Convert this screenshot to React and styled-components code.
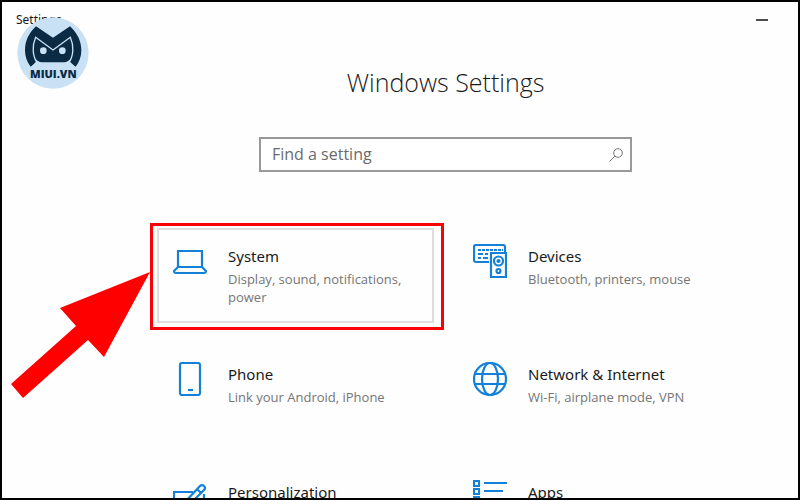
import React from "react";
import styled, { createGlobalStyle } from "styled-components";

const GlobalStyle = createGlobalStyle`
  * { box-sizing: border-box; }
  body { margin: 0; background: #fff; }
`;

const Window = styled.div`
  position: relative;
  height: 100vh;
  overflow: hidden;
  border: 2px solid #000;
  background: #fefefe;
  color: #1a1a1a;
  font-family: "Noto Sans", "Open Sans", sans-serif;
`;

const TitleBar = styled.header`
  display: flex;
  justify-content: space-between;
  align-items: center;
  height: 36px;
  padding: 0 28px 0 14px;
`;

const WindowName = styled.span`
  font-size: 12px;
  line-height: 16px;
`;

const MinimizeButton = styled.button`
  display: flex;
  align-items: center;
  justify-content: center;
  width: 16px;
  height: 24px;
  padding: 0;
  border: 0;
  background: transparent;
  color: #000;
`;

const Logo = styled.svg`
  position: absolute;
  top: 15px;
  left: 15px;
  width: 72px;
  height: 72px;
`;

const Main = styled.main`
  display: flex;
  flex-direction: column;
  align-items: center;
  padding: 24px 0 0 91px;
`;

const Heading = styled.h1`
  margin: 0 0 35px;
  font-family: "Open Sans", sans-serif;
  font-size: 25px;
  font-weight: 300;
  line-height: 40px;
`;

const SearchBox = styled.form`
  display: flex;
  align-items: center;
  width: 373px;
  max-width: 100%;
  height: 35px;
  margin-bottom: 56px;
  padding: 0 7px 0 11px;
  border: 2px solid #999;
  background: #fff;
`;

const SearchInput = styled.input`
  flex: 1;
  min-width: 0;
  height: 24px;
  padding: 0 0 2px;
  border: 0;
  outline: 0;
  background: transparent;
  color: #1a1a1a;
  font-family: "Open Sans", sans-serif;
  font-size: 16px;
  &::placeholder { color: #6b6b6b; opacity: 1; }
`;

const SearchButton = styled.button`
  display: flex;
  padding: 0;
  border: 0;
  background: transparent;
  color: #777;
`;

const Grid = styled.nav`
  display: grid;
  grid-template-columns: repeat(2, 277px);
  grid-auto-rows: 95px;
  gap: 23px;
`;

const Card = styled.a`
  position: relative;
  display: flex;
  gap: 21px;
  padding: 14px;
  border: 2px solid ${(p) => (p.$active ? "#dedede" : "transparent")};
  color: inherit;
  text-decoration: none;
`;

const CardIcon = styled.svg`
  flex: none;
  width: 34px;
  height: 34px;
  fill: none;
  stroke: #1580d8;
  stroke-width: 2.2;
`;

const CardTitle = styled.span`
  display: block;
  font-size: 15px;
  line-height: 24px;
  white-space: nowrap;
`;

const CardText = styled.span`
  display: block;
  padding: 2px 0 0;
  color: #757575;
  font-family: "Open Sans", sans-serif;
  font-size: 13px;
  line-height: 18px;
`;

const Highlight = styled.span`
  position: absolute;
  inset: -7px -12px -9px -9px;
  border: 3px solid #fb0007;
  pointer-events: none;
`;

const Arrow = styled.svg`
  position: absolute;
  top: 41px;
  right: 100%;
  width: 140px;
  height: 128px;
  margin-right: 9px;
  fill: #fe0000;
  pointer-events: none;
`;

const icons = {
  laptop: (
    <>
      <path d="M5 7h24v16H5z" />
      <path d="M5 23 1 27q0 2 2 2h28q2 0 2-2l-4-4" />
    </>
  ),
  devices: (
    <>
      <path d="M16 18H3q-2 0-2-2V3q0-2 2-2h27q2 0 2 2v5" />
      <path d="M5 6h25" strokeDasharray="3 1" />
      <path d="M5 10h5M12 10h3M5 14h3M10 14h5" />
      <path d="M18 9h15v24H18z" />
      <circle cx="25.5" cy="17" r="4.5" />
      <circle cx="25.5" cy="17" r="1" />
      <circle cx="25.5" cy="27" r="2" />
    </>
  ),
  phone: (
    <>
      <rect x="7" y="1" width="20" height="32" rx="2" />
      <path d="M15 28h5" />
    </>
  ),
  globe: (
    <>
      <circle cx="17" cy="17" r="16" />
      <ellipse cx="17" cy="17" rx="8" ry="16" />
      <path d="M2 12h30M2 22h30" />
    </>
  ),
  pen: (
    <>
      <path d="M20 12H1v20h30V14" />
      <path d="M12 22 27 6q2-2 4 0t0 4L17 24l-6 2z M24 9l4 4" />
    </>
  ),
  list: (
    <>
      <path d="M1 1h5v5H1zM1 9h5v5H1zM1 17h5v5H1z" />
      <path d="M11 3h23M11 11h19M11 19h23" />
    </>
  ),
};

const categories = [
  { icon: "laptop", title: "System", text: "Display, sound, notifications, power", active: true },
  { icon: "devices", title: "Devices", text: "Bluetooth, printers, mouse" },
  { icon: "phone", title: "Phone", text: "Link your Android, iPhone" },
  { icon: "globe", title: "Network & Internet", text: "Wi-Fi, airplane mode, VPN" },
  { icon: "pen", title: "Personalization" },
  { icon: "list", title: "Apps" },
];

function MiuiLogo() {
  return (
    <Logo viewBox="50 52 216 216" role="img" aria-label="MIUI.VN">
      <circle cx="158" cy="160" r="107" fill="#c9e1f5" />
      <path
        fill="#0b2b45"
        d="M107 80 158 114 209 80C232 101 243 126 243 152 243 171 237 187 226 201L206 186 158 151 110 186 91 201C80 187 74 171 74 152 74 126 84 101 107 80Z"
      />
      <path
        fill="#0b2b45"
        stroke="#c9e1f5"
        strokeWidth="4"
        d="M110 188C96 168 95 138 106 113L158 151 210 113C221 138 220 168 206 188"
      />
      <path fill="#c9e1f5" d="M92 203 107 186 102 176Q125 197 158 197T214 176L209 186 225 203Z" />
      <circle cx="129" cy="153" r="10" fill="#c9e1f5" />
      <circle cx="186" cy="153" r="10" fill="#c9e1f5" />
      <text x="159" y="234" textAnchor="middle" fill="#0b2b45" fontFamily="Open Sans, sans-serif" fontWeight="800" fontSize="33">
        MIUI.VN
      </text>
    </Logo>
  );
}

export default function App() {
  return (
    <>
      <GlobalStyle />
      <Window>
        <TitleBar>
          <WindowName>Settings</WindowName>
          <MinimizeButton aria-label="Minimize">
            <svg width="12" height="2" viewBox="0 0 12 2" aria-hidden="true">
              <path d="M0 1h12" stroke="currentColor" strokeWidth="1.4" />
            </svg>
          </MinimizeButton>
          <MiuiLogo />
        </TitleBar>
        <Main>
          <Heading>Windows Settings</Heading>
          <SearchBox role="search" onSubmit={(e) => e.preventDefault()}>
            <SearchInput type="text" placeholder="Find a setting" aria-label="Find a setting" />
            <SearchButton type="submit" aria-label="Search">
              <svg width="14" height="14" viewBox="0 0 14 14" fill="none" stroke="currentColor" aria-hidden="true">
                <circle cx="9" cy="5" r="4.3" />
                <path d="M6 8 .5 13.5" />
              </svg>
            </SearchButton>
          </SearchBox>
          <Grid aria-label="Settings categories">
            {categories.map(({ icon, title, text, active }) => (
              <Card key={title} href="#" $active={active}>
                <CardIcon viewBox="0 0 34 34" aria-hidden="true">{icons[icon]}</CardIcon>
                <span>
                  <CardTitle>{title}</CardTitle>
                  {text && <CardText>{text}</CardText>}
                </span>
                {active && (
                  <>
                    <Highlight />
                    <Arrow viewBox="0 0 140 128" aria-hidden="true">
                      <path d="M140 1 50 37 66 55 1 113 13 127 78 69 94 86Z" />
                    </Arrow>
                  </>
                )}
              </Card>
            ))}
          </Grid>
        </Main>
      </Window>
    </>
  );
}
